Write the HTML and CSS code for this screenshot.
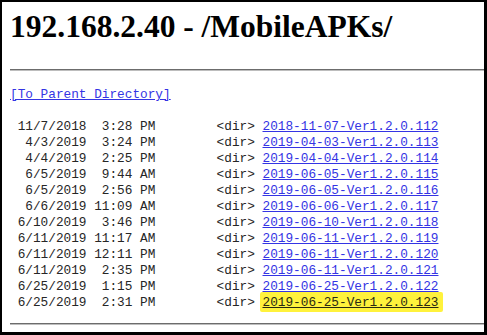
FILE: index.html
```html
<!DOCTYPE html>
<html lang="en">
<head>
    <meta charset="UTF-8">
    <title>192.168.2.40 - /MobileAPKs/</title>
    <link rel="stylesheet" href="styles.css">
</head>
<body>
    <div class="frame">
        <h1>192.168.2.40 - /MobileAPKs/</h1>
        <hr>
        <pre class="listing"><a href="#">[To Parent Directory]</a><br><br> 11/7/2018  3:28 PM        &lt;dir&gt; <a href="#">2018-11-07-Ver1.2.0.112</a><br>  4/3/2019  3:24 PM        &lt;dir&gt; <a href="#">2019-04-03-Ver1.2.0.113</a><br>  4/4/2019  2:25 PM        &lt;dir&gt; <a href="#">2019-04-04-Ver1.2.0.114</a><br>  6/5/2019  9:44 AM        &lt;dir&gt; <a href="#">2019-06-05-Ver1.2.0.115</a><br>  6/5/2019  2:56 PM        &lt;dir&gt; <a href="#">2019-06-05-Ver1.2.0.116</a><br>  6/6/2019 11:09 AM        &lt;dir&gt; <a href="#">2019-06-06-Ver1.2.0.117</a><br> 6/10/2019  3:46 PM        &lt;dir&gt; <a href="#">2019-06-10-Ver1.2.0.118</a><br> 6/11/2019 11:17 AM        &lt;dir&gt; <a href="#">2019-06-11-Ver1.2.0.119</a><br> 6/11/2019 12:11 PM        &lt;dir&gt; <a href="#">2019-06-11-Ver1.2.0.120</a><br> 6/11/2019  2:35 PM        &lt;dir&gt; <a href="#">2019-06-11-Ver1.2.0.121</a><br> 6/25/2019  1:15 PM        &lt;dir&gt; <a href="#">2019-06-25-Ver1.2.0.122</a><br> 6/25/2019  2:31 PM        &lt;dir&gt; <a href="#" class="marked">2019-06-25-Ver1.2.0.123</a><br></pre>
        <hr class="bottom">
    </div>
</body>
</html>
```

FILE: styles.css
```css
body {
    margin: 0;
    background-color: #fff;
}
.frame {
    box-sizing: border-box;
    width: 487px;
    height: 335px;
    border: solid #000;
    border-width: 2px 3px 3px 2px;
    padding-left: 8px;
    overflow: hidden;
}
h1 {
    margin: 6px 0 0;
    font-family: "Liberation Serif", serif;
    font-size: 31.5px;
    font-weight: bold;
    line-height: 37px;
    color: #000;
}
hr {
    height: 0;
    margin: 24px 0 0;
    border: 0;
    border-top: 1px solid #6c6c6c; /* inset look */
    border-bottom: 1px solid #bdbdbd;
}
hr.bottom {
    margin-top: 12px;
}
.listing {
    margin: 16px 0 0;
    font-family: "Liberation Mono", monospace;
    font-size: 12.75px;
    line-height: 16px;
    color: #262626;
}
.listing a {
    color: #3434e4;
    text-decoration: underline;
}
.listing a.marked {
    color: #2a2a12;
    background-color: #fff23c; /* highlighter */
    padding: 3px 5px 2px 3px;
    margin-left: -3px;
    border-radius: 2px;
}
```
